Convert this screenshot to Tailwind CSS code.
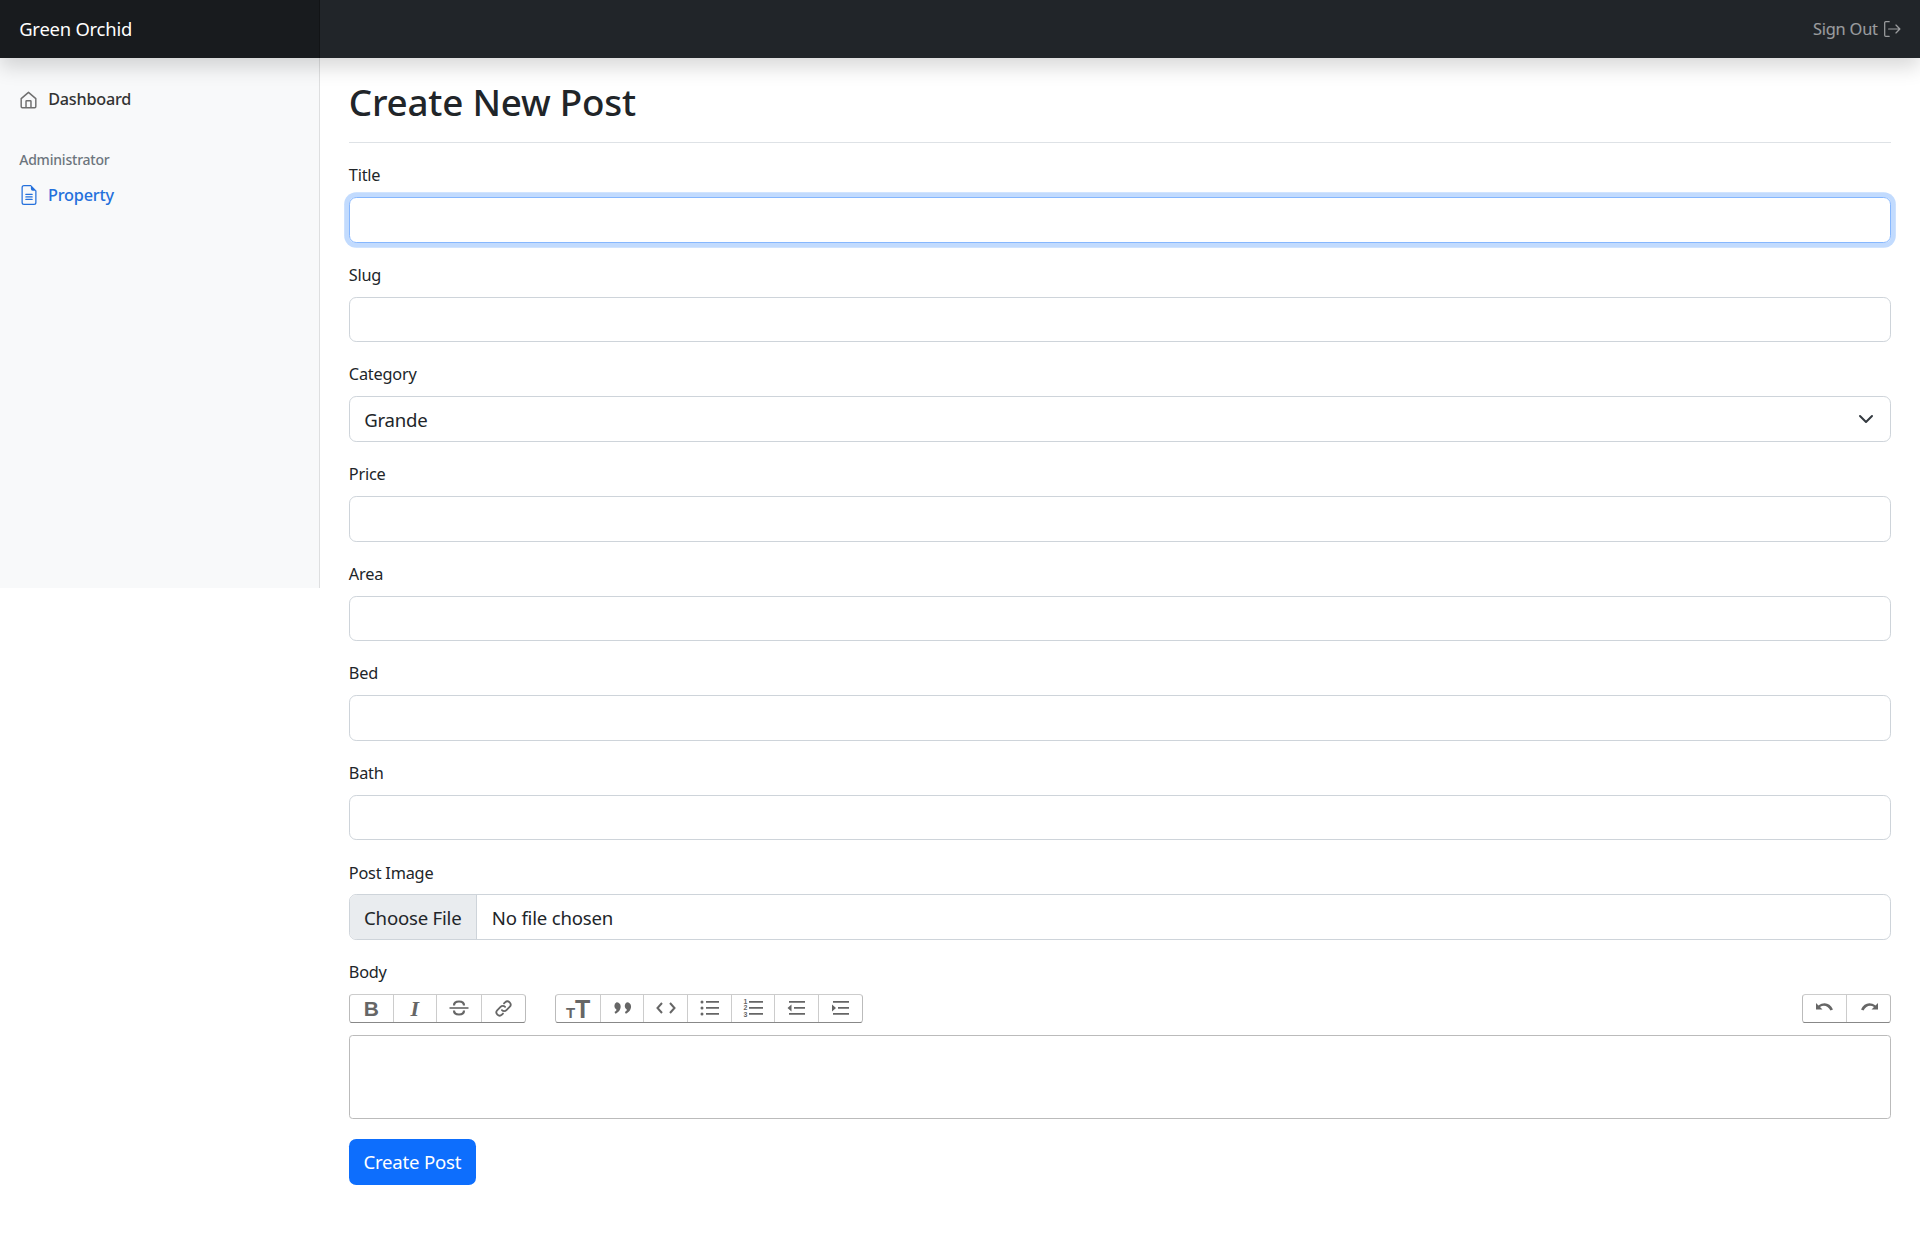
<!DOCTYPE html>
<html lang="en">
<head>
    <meta charset="UTF-8">
    <meta name="viewport" content="width=device-width, initial-scale=1.0">
    <title>Create New Post</title>
    <script src="https://cdn.jsdelivr.net/npm/@tailwindcss/browser@4"></script>
</head>
<body class="bg-white text-[#212529] font-['Noto_Sans',sans-serif] tracking-[-0.013em]">
    <header class="relative z-10 flex h-[57.6px] items-center justify-between bg-[#212529] shadow-[0_9.6px_19.2px_rgba(0,0,0,0.15)]">
        <a class="flex h-full w-[320px] items-center bg-[#181b1e] px-[19.2px] pt-[1px] text-[18.4px] text-white shadow-[inset_-1px_0_0_rgba(0,0,0,0.25)]">Green Orchid</a>
        <a class="flex items-center gap-[5px] pt-[1px] pr-[19.2px] text-[16.4px] text-white/55">
            Sign Out
            <svg class="h-[18px] w-[18px]" viewBox="0 0 16 16" fill="none" stroke="currentColor" stroke-width="1.1" stroke-linecap="round" stroke-linejoin="round"><path d="M5.500 1.500H2.500a1 1 0 0 0-1 1v11a1 1 0 0 0 1 1h3"/><path d="M5 8h10M11.500 4.500 15 8l-3.500 3.500"/></svg>
        </a>
    </header>

    <div class="flex">
        <nav class="h-[530px] w-[320px] shrink-0 bg-[#f8f9fa] pt-[19.2px] shadow-[inset_-1px_0_0_rgba(0,0,0,0.1)]">
            <a class="flex h-[44.4px] items-center gap-[10px] px-[19.2px] text-[16.2px] font-medium text-[#333]">
                <svg class="mt-[3px] h-[18px] w-[19px] text-[#6f6f6f]" viewBox="0 0 16 16" fill="none" stroke="currentColor" stroke-width="1.3" stroke-linejoin="round"><path d="M1.500 6.800 8 1.200l6.500 5.600v7a1 1 0 0 1-1 1h-11a1 1 0 0 1-1-1z"/><path d="M5.800 14.800V9.200a.6.6 0 0 1 .6-.6h3.200a.6.6 0 0 1 .6.6v5.600"/></svg>
                Dashboard
            </a>
            <h6 class="mt-[28px] mb-[2px] px-[19.2px] text-[14px] leading-[21.6px] font-medium text-[#6c757d]">Administrator</h6>
            <a class="flex h-[44.4px] items-center gap-[9.5px] pr-[19.2px] pl-[18.5px] text-[16.3px] font-medium text-[#2470dc]">
                <svg class="h-[20px] w-[20px]" viewBox="0 0 16 16" fill="currentColor"><path d="M5.500 7a.5.5 0 0 0 0 1h5a.5.5 0 0 0 0-1h-5zM5 9.500a.5.5 0 0 1 .5-.5h5a.5.5 0 0 1 0 1h-5a.5.5 0 0 1-.5-.5zm0 2a.5.5 0 0 1 .5-.5h5a.5.5 0 0 1 0 1h-5a.5.5 0 0 1-.5-.5z"/><path d="M9.500 0H4a2 2 0 0 0-2 2v12a2 2 0 0 0 2 2h8a2 2 0 0 0 2-2V4.500L9.500 0zm0 1v2A1.500 1.500 0 0 0 11 4.500h2V14a1 1 0 0 1-1 1H4a1 1 0 0 1-1-1V2a1 1 0 0 1 1-1h5.500z"/></svg>
                Property
            </a>
        </nav>

        <main class="min-w-0 flex-1 px-[28.8px]">
            <div class="mb-[19.2px] border-b border-[#dee2e6] pt-[21px] pb-[9.6px]">
                <h1 class="mb-[7.8px] text-[36.8px] leading-[46px] font-medium">Create New Post</h1>
            </div>

            <form>
                <div class="mb-[19.2px]">
                    <label class="mb-[8.6px] block pt-[1px] text-[16.3px] leading-[25.2px]">Title</label>
                    <input type="text" class="block h-[45.6px] w-full rounded-[7.2px] border border-[#86b7fe] px-[14.4px] text-[18.6px] shadow-[0_0_0_4.8px_rgba(13,110,253,0.25)] outline-none">
                </div>
                <div class="mb-[19.2px]">
                    <label class="mb-[8.6px] block pt-[1px] text-[16.3px] leading-[25.2px]">Slug</label>
                    <input type="text" class="block h-[45.6px] w-full rounded-[7.2px] border border-[#ced4da] px-[14.4px] text-[18.6px]">
                </div>
                <div class="mb-[19.2px]">
                    <label class="mb-[8.6px] block pt-[1px] text-[16.3px] leading-[25.2px]">Category</label>
                    <div class="relative">
                        <select class="block h-[46px] w-full appearance-none rounded-[7.2px] border border-[#ced4da] bg-white px-[14.4px] pt-[2px] text-[18.6px] tracking-[-0.013em]">
                            <option>Grande</option>
                        </select>
                        <svg class="absolute top-[15px] right-[17px] h-[16px] w-[16px]" viewBox="0 0 16 16" fill="none" stroke="#343a40" stroke-width="2" stroke-linecap="round" stroke-linejoin="round"><path d="m2 5 6 6 6-6"/></svg>
                    </div>
                </div>
                <div class="mb-[19.2px]">
                    <label class="mb-[8.6px] block pt-[1px] text-[16.3px] leading-[25.2px]">Price</label>
                    <input type="text" class="block h-[45.6px] w-full rounded-[7.2px] border border-[#ced4da] px-[14.4px] text-[18.6px]">
                </div>
                <div class="mb-[19.2px]">
                    <label class="mb-[8.6px] block pt-[1px] text-[16.3px] leading-[25.2px]">Area</label>
                    <input type="text" class="block h-[45.6px] w-full rounded-[7.2px] border border-[#ced4da] px-[14.4px] text-[18.6px]">
                </div>
                <div class="mb-[19.2px]">
                    <label class="mb-[8.6px] block pt-[1px] text-[16.3px] leading-[25.2px]">Bed</label>
                    <input type="text" class="block h-[45.6px] w-full rounded-[7.2px] border border-[#ced4da] px-[14.4px] text-[18.6px]">
                </div>
                <div class="mb-[19.2px]">
                    <label class="mb-[8.6px] block pt-[1px] text-[16.3px] leading-[25.2px]">Bath</label>
                    <input type="text" class="block h-[45.6px] w-full rounded-[7.2px] border border-[#ced4da] px-[14.4px] text-[18.6px]">
                </div>
                <div class="mb-[19.2px]">
                    <label class="mb-[8.6px] block pt-[1px] text-[16.3px] leading-[25.2px]">Post Image</label>
                    <div class="flex h-[45.6px] items-center overflow-hidden rounded-[7.2px] border border-[#ced4da] text-[18.6px]">
                        <span class="flex h-full w-[127px] items-center justify-center border-r border-[#ced4da] bg-[#e9ecef] pt-[1px]">Choose File</span>
                        <span class="px-[15px] pt-[1px]">No file chosen</span>
                    </div>
                </div>

                <div class="mb-[20.2px]">
                    <label class="mb-[8.6px] block pt-[1px] text-[16.3px] leading-[25.2px]">Body</label>
                    <div class="mb-[12px] flex justify-between">
                        <div class="flex gap-[29px]">
                            <div class="flex h-[28.5px] rounded-[3.6px] border border-[#bbb] border-t-[#ccc] border-b-[#888] text-[#666]">
                                <span class="flex w-[44px] items-center justify-center border-r border-[#ccc] font-['Liberation_Sans',sans-serif] text-[21px] font-bold">B</span>
                                <span class="flex w-[43px] items-center justify-center border-r border-[#ccc] font-['Liberation_Serif',serif] text-[22px] font-bold italic">I</span>
                                <span class="flex w-[45px] items-center justify-center border-r border-[#ccc]">
                                    <svg class="h-[20px] w-[20px]" viewBox="0 0 20 20" fill="none" stroke="currentColor" stroke-width="2.200"><path d="M15 7.500C15 5 13 3.500 10 3.500S5 5 5 7.500M5 12.500c0 2.500 2 4 5 4s5-1.500 5-4"/><path d="M0.500 10h19" stroke-width="1.600"/></svg>
                                </span>
                                <span class="flex w-[43px] items-center justify-center">
                                    <svg class="h-[19px] w-[19px]" viewBox="0 0 18 18" fill="none" stroke="currentColor" stroke-width="1.700" stroke-linecap="round"><path d="M7.500 10.500a3 3 0 0 0 4.300 0l3-3a3 3 0 0 0-4.300-4.300l-1 1"/><path d="M10.500 7.500a3 3 0 0 0-4.300 0l-3 3a3 3 0 0 0 4.300 4.300l1-1"/></svg>
                                </span>
                            </div>
                            <div class="flex h-[28.5px] rounded-[3.6px] border border-[#bbb] border-t-[#ccc] border-b-[#888] text-[#666]">
                                <span class="flex w-[45.5px] items-end justify-center border-r border-[#ccc] pb-[2px] font-['Liberation_Sans',sans-serif] leading-none font-bold"><span class="text-[15px]">T</span><span class="text-[25px] leading-[22px]">T</span></span>
                                <span class="flex w-[43px] items-center justify-center border-r border-[#ccc]">
                                    <svg class="h-[12px] w-[20px]" viewBox="0 0 18 11" fill="currentColor"><path d="M4 .3a3.800 3.800 0 0 1 3.800 3.800c0 3-2.200 5.700-4.800 6.600l-.9-1.500c1-.7 1.700-1.400 1.900-2.200A3.800 3.800 0 0 1 4 .3z"/><path d="M13.500 .3a3.800 3.800 0 0 1 3.800 3.800c0 3-2.200 5.700-4.800 6.600l-.9-1.500c1-.7 1.700-1.400 1.900-2.200a3.800 3.800 0 0 1 0-6.700z"/></svg>
                                </span>
                                <span class="flex w-[44px] items-center justify-center border-r border-[#ccc]">
                                    <svg class="h-[18px] w-[22px]" viewBox="0 0 22 18" fill="none" stroke="currentColor" stroke-width="2"><path d="M7 4 2.500 9 7 14M15 4l4.500 5-4.500 5"/></svg>
                                </span>
                                <span class="flex w-[44px] items-center justify-center border-r border-[#ccc]">
                                    <svg class="h-[18px] w-[20px]" viewBox="0 0 20 18" fill="currentColor"><circle cx="2" cy="3" r="1.500"/><circle cx="2" cy="9" r="1.500"/><circle cx="2" cy="15" r="1.500"/><path d="M6 2h13v1.800H6zM6 8h13v1.800H6zM6 14h13v1.800H6z"/></svg>
                                </span>
                                <span class="flex w-[43px] items-center justify-center border-r border-[#ccc]">
                                    <span class="mr-[2px] flex flex-col text-center font-['Liberation_Sans',sans-serif] text-[7px] leading-[6.5px] font-bold"><span>1</span><span>2</span><span>3</span></span>
                                    <svg class="h-[18px] w-[14px]" viewBox="0 0 14 18" fill="currentColor"><path d="M0 2h14v1.800H0zM0 8h14v1.800H0zM0 14h14v1.800H0z"/></svg>
                                </span>
                                <span class="flex w-[44px] items-center justify-center border-r border-[#ccc]">
                                    <svg class="h-[18px] w-[20px]" viewBox="0 0 20 18" fill="currentColor"><path d="M2 2h16v1.800H2zM7 8h11v1.800H7zM2 14h16v1.800H2zM4.500 5.500v7L0.500 9z"/></svg>
                                </span>
                                <span class="flex w-[43px] items-center justify-center">
                                    <svg class="h-[18px] w-[20px]" viewBox="0 0 20 18" fill="currentColor"><path d="M2 2h16v1.800H2zM7 8h11v1.800H7zM2 14h16v1.800H2zM1 5.500v7L5 9z"/></svg>
                                </span>
                            </div>
                        </div>
                        <div class="flex h-[28.5px] w-[89px] rounded-[3.6px] border border-[#bbb] border-t-[#ccc] border-b-[#888] text-[#666]">
                            <span class="flex w-[44px] items-center justify-center border-r border-[#ccc]">
                                <svg class="h-[16px] w-[20px]" viewBox="0 0 20 16" fill="currentColor"><path d="M1 3v6.500h6.500L5 7c3.500-2.500 8-1.500 10.500 3.500l2.500-1C15 3 9 1.500 3.500 5.500z"/></svg>
                            </span>
                            <span class="flex flex-1 items-center justify-center">
                                <svg class="h-[16px] w-[20px]" viewBox="0 0 20 16" fill="currentColor"><path d="M19 3v6.500h-6.500L15 7c-3.500-2.500-8-1.500-10.500 3.500L2 9.500C5 3 11 1.500 16.500 5.500z"/></svg>
                            </span>
                        </div>
                    </div>
                    <div class="h-[84.5px] rounded-[3.6px] border border-[#bbb]"></div>
                </div>

                <button type="button" class="h-[45.6px] w-[127px] rounded-[7.2px] bg-[#0d6efd] text-[18.6px] text-white">Create Post</button>
            </form>
        </main>
    </div>
</body>
</html>
